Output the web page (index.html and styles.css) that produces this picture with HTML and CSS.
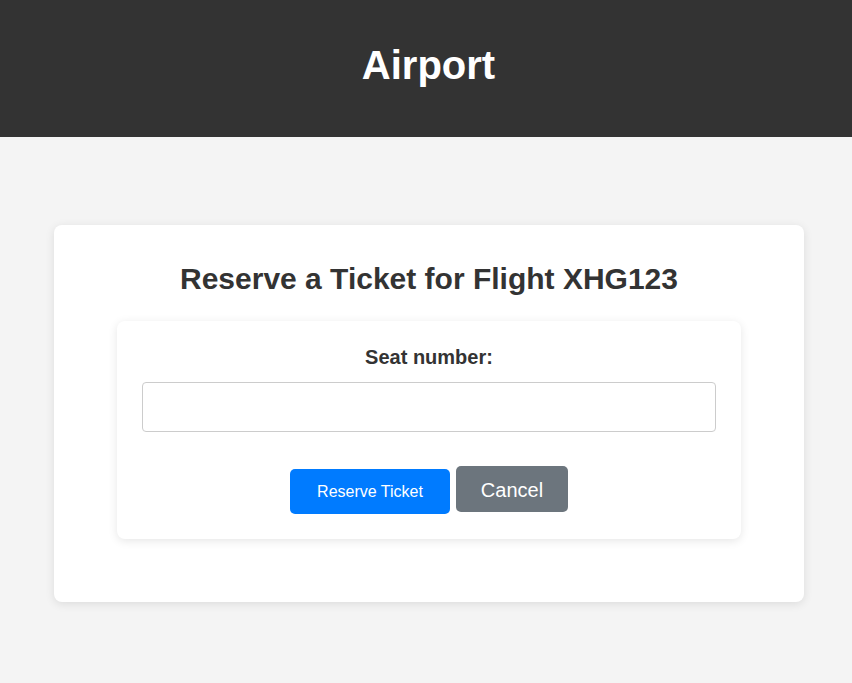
FILE: index.html
```html
<!DOCTYPE html>
<html lang="en">
<head>
<meta charset="utf-8">
<title>Airport</title>
<link rel="stylesheet" href="styles.css">
</head>
<body>
<header class="site-header">
  <h1 class="site-title">Airport</h1>
</header>
<main class="page">
  <section class="card">
    <h2 class="card-title">Reserve a Ticket for Flight XHG123</h2>
    <form class="reserve-form">
      <label class="field-label" for="seat">Seat number:</label>
      <input class="field-input" id="seat" type="text">
      <div class="actions">
        <button type="submit" class="btn btn-primary">Reserve Ticket</button>
        <button type="button" class="btn btn-secondary">Cancel</button>
      </div>
    </form>
  </section>
</main>
</body>
</html>
```
FILE: styles.css
```css
html, body {
  margin: 0;
  padding: 0;
}
body {
  background: #f4f4f4;
  font-family: "Liberation Sans", Arial, sans-serif;
  color: #333;
}
.site-header {
  background: #333;
  height: 137px;
  box-sizing: border-box;
  padding: 42px 0 0 5px;
  text-align: center;
}
.site-title {
  margin: 0;
  color: #fff;
  font-size: 40px;
  font-weight: bold;
  line-height: 46px;
}
.page {
  padding: 88px 48px 40px 54px;
}
.card {
  background: #fff;
  border-radius: 8px;
  box-shadow: 0 2px 10px rgba(0, 0, 0, 0.1);
  padding: 37px 63px 63px;
}
.card-title {
  margin: 0 0 24px;
  text-align: center;
  font-size: 30px;
  line-height: 34.5px;
  font-weight: bold;
  color: #333;
}
.reserve-form {
  display: flex;
  flex-direction: column;
  align-items: stretch;
  padding: 25px;
  background: #fff;
  border-radius: 8px;
  box-shadow: 0 2px 10px rgba(0, 0, 0, 0.1);
}
.field-label {
  text-align: center;
  font-size: 20px;
  line-height: 23px;
  font-weight: bold;
  color: #333;
  margin-bottom: 13px;
}
.field-input {
  height: 50px;
  box-sizing: border-box;
  border: 1px solid #ccc;
  border-radius: 4px;
  padding: 10px;
  font-size: 16px;
  font-family: "Liberation Sans", Arial, sans-serif;
  margin-bottom: 34px;
}
.actions {
  display: flex;
  justify-content: center;
  align-items: flex-start;
  gap: 6px;
}
.btn {
  border: none;
  color: #fff;
  font-family: "Liberation Sans", Arial, sans-serif;
  border-radius: 5px;
  cursor: pointer;
  box-sizing: border-box;
}
.btn-primary {
  background: #007bff;
  font-size: 16px;
  line-height: 18px;
  width: 160px;
  height: 45px;
  padding: 2px 0 0;
  margin-top: 3px;
}
.btn-secondary {
  background: #6c757d;
  font-size: 20px;
  line-height: 23px;
  width: 112px;
  height: 46px;
  padding: 4px 0 0;
}
```
